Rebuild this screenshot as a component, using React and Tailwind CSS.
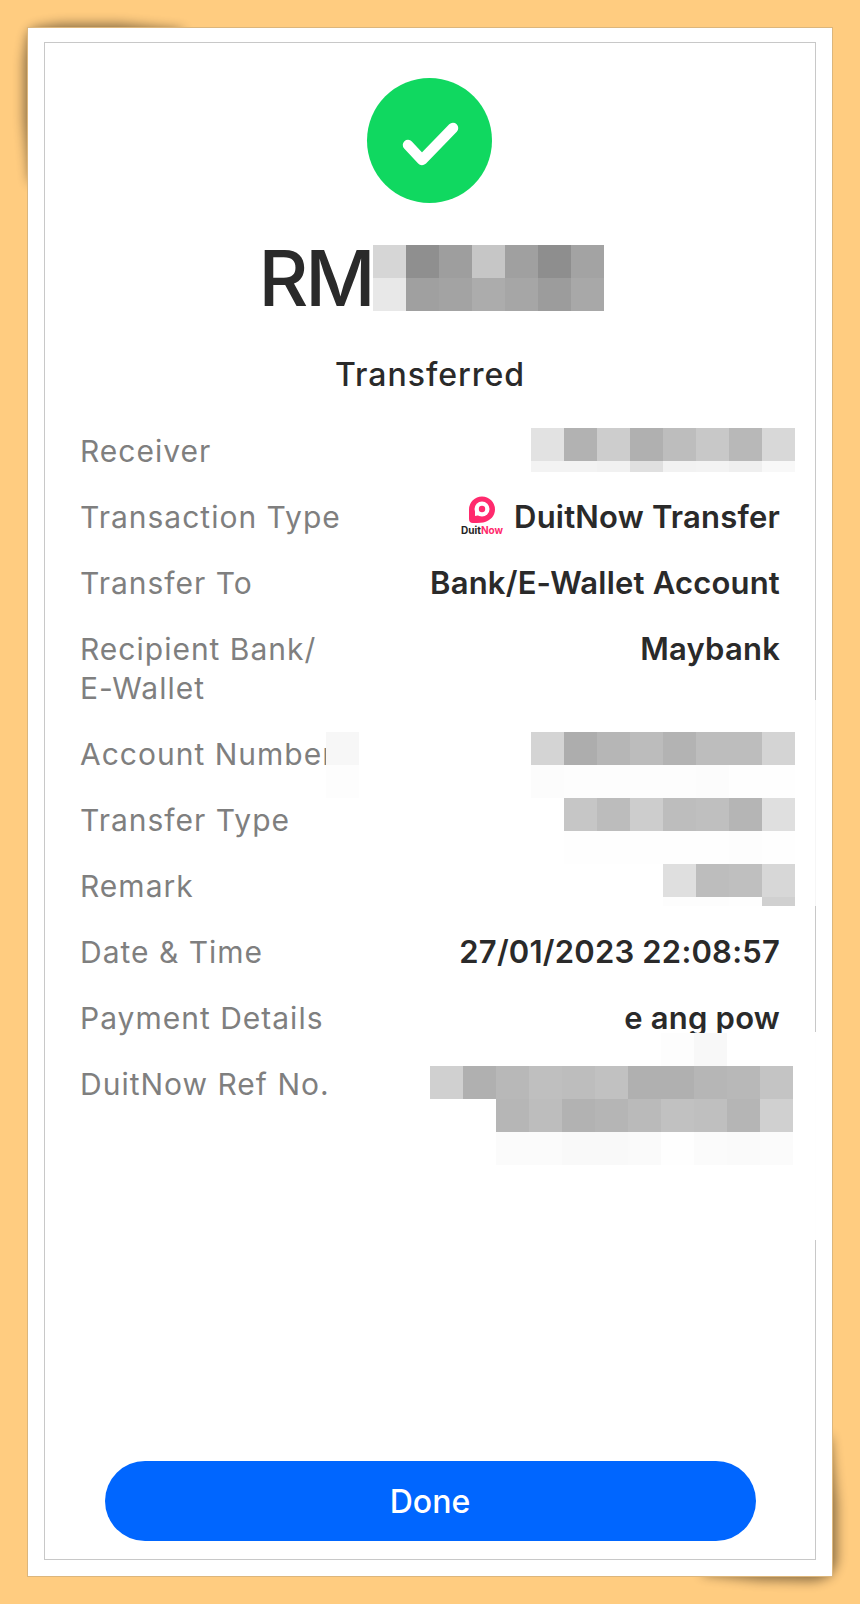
const mosaics = {
  amount: [
    { h: 'h-[33px]', cells: ['bg-[#d6d6d6]', 'bg-[#8f8f8f]', 'bg-[#9e9e9e]', 'bg-[#c6c6c6]', 'bg-[#a0a0a0]', 'bg-[#8e8e8e]', 'bg-[#a3a3a3]'] },
    { h: 'h-[33px]', cells: ['bg-[#e8e8e8]', 'bg-[#a0a0a0]', 'bg-[#a3a3a3]', 'bg-[#acacac]', 'bg-[#a6a6a6]', 'bg-[#9c9c9c]', 'bg-[#a8a8a8]'] },
  ],
  receiver: [
    { h: 'h-[33px]', cells: ['bg-[#e2e2e2]', 'bg-[#b2b2b2]', 'bg-[#cdcdcd]', 'bg-[#b0b0b0]', 'bg-[#bdbdbd]', 'bg-[#c8c8c8]', 'bg-[#b8b8b8]', 'bg-[#d8d8d8]'] },
    { h: 'h-[11px]', cells: ['bg-[#f3f3f3]', 'bg-[#f3f3f3]', 'bg-[#f1f1f1]', 'bg-[#e0e0e0]', 'bg-[#f2f2f2]', 'bg-[#f3f3f3]', 'bg-[#efefef]', 'bg-[#f8f8f8]'] },
  ],
  account: [
    { h: 'h-[33px]', cells: ['bg-[#d4d4d4]', 'bg-[#adadad]', 'bg-[#b6b6b6]', 'bg-[#bcbcbc]', 'bg-[#b3b3b3]', 'bg-[#bdbdbd]', 'bg-[#bdbdbd]', 'bg-[#d4d4d4]'] },
    { h: 'h-[33px]', cells: ['bg-[#fcfcfc]', 'bg-[#fdfdfd]', 'bg-[#fdfdfd]', 'bg-[#fdfdfd]', 'bg-[#fdfdfd]', 'bg-[#fcfcfc]', 'bg-[#fefefe]', 'bg-[#fefefe]'] },
  ],
  accountLabel: [
    { h: 'h-[33px]', cells: ['bg-[#f7f7f7]'] },
    { h: 'h-[33px]', cells: ['bg-[#fdfdfd]'] },
  ],
  transferType: [
    { h: 'h-[33px]', cells: ['bg-[#c6c6c6]', 'bg-[#bcbcbc]', 'bg-[#cdcdcd]', 'bg-[#bdbdbd]', 'bg-[#bfbfbf]', 'bg-[#b5b5b5]', 'bg-[#dfdfdf]'] },
    { h: 'h-[33px]', cells: ['bg-[#fefefe]', 'bg-[#fefefe]', 'bg-[#fefefe]', 'bg-[#fefefe]', 'bg-[#fefefe]', 'bg-[#fdfdfd]', 'bg-[#fefefe]'] },
  ],
  remark: [
    { h: 'h-[33px]', cells: ['bg-[#dfdfdf]', 'bg-[#bdbdbd]', 'bg-[#bfbfbf]', 'bg-[#d7d7d7]'] },
    { h: 'h-[9px]', cells: ['bg-[#fdfdfd]', 'bg-[#fdfdfd]', 'bg-[#fefefe]', 'bg-[#d0d0d0]'] },
  ],
  ref: [
    { h: 'h-[33px]', cells: [null, null, null, null, null, 'bg-white', 'bg-white', 'bg-[#fdfdfd]', 'bg-[#f8f8f8]', 'bg-white', 'bg-white'] },
    { h: 'h-[33px]', cells: ['bg-[#d0d0d0]', 'bg-[#b0b0b0]', 'bg-[#b8b8b8]', 'bg-[#bfbfbf]', 'bg-[#bdbdbd]', 'bg-[#c1c1c1]', 'bg-[#b0b0b0]', 'bg-[#b0b0b0]', 'bg-[#b6b6b6]', 'bg-[#b8b8b8]', 'bg-[#c4c4c4]'] },
    { h: 'h-[33px]', cells: [null, null, 'bg-[#b6b6b6]', 'bg-[#bdbdbd]', 'bg-[#b2b2b2]', 'bg-[#b5b5b5]', 'bg-[#bababa]', 'bg-[#c1c1c1]', 'bg-[#bfbfbf]', 'bg-[#b5b5b5]', 'bg-[#d0d0d0]'] },
    { h: 'h-[33px]', cells: [null, null, 'bg-[#fbfbfb]', 'bg-[#fbfbfb]', 'bg-[#f9f9f9]', 'bg-[#f9f9f9]', 'bg-[#fafafa]', 'bg-[#fefefe]', 'bg-[#fbfbfb]', 'bg-[#fafafa]', 'bg-[#fbfbfb]'] },
  ],
}

function Mosaic({ rows, className = '' }) {
  return (
    <div className={`flex flex-col ${className}`}>
      {rows.map((row, i) => (
        <div key={i} className={`flex ${row.h}`}>
          {row.cells.map((cell, j) => (
            <div key={j} className={`w-[33px] h-full ${cell || ''}`} />
          ))}
        </div>
      ))}
    </div>
  )
}

function DuitNowLogo() {
  return (
    <div className="flex flex-col items-center w-[44px] mr-[10px] mt-[-4px]">
      <svg width="28" height="27" viewBox="0 0 28 27">
        <path d="M1 13.5a13 13 0 1 1 26 0c0 6.5-5 11-10 12.5-2 .6-6 .9-12 1a4 4 0 0 1-4-4z" fill="#ff2a6d" />
        <circle cx="14" cy="13" r="7.5" fill="#fff" />
        <path d="M7 13v7l5-1z" fill="#fff" />
        <circle cx="14" cy="13" r="3.2" fill="#ff2a6d" />
      </svg>
      <div className="text-[10px] leading-[10px] font-bold tracking-normal mt-[2px]">
        <span className="text-[#222222]">Duit</span>
        <span className="text-[#ff2a6d]">Now</span>
      </div>
    </div>
  )
}

function Row({ label, children }) {
  return (
    <div className="relative flex justify-between items-start leading-[38px] mb-[28px]">
      <div className="w-[280px] text-[30px] text-[#7f7f7f] tracking-[1px]">{label}</div>
      <div className="flex items-center text-[31px] font-semibold text-[#2a2a2a] tracking-[0.2px] whitespace-nowrap">{children}</div>
    </div>
  )
}

export default function App() {
  return (
    <div className="relative h-[1604px] w-[860px] overflow-hidden bg-[#ffcc80] px-[27px] pt-[27px] pb-[27px] font-['Inter',sans-serif]">
      {/* curled corner shadows */}
      <div className="absolute left-0 top-0 blur-[6px] opacity-45">
        <div className="w-[220px] h-[220px] bg-black [clip-path:polygon(34px_28px,60px_24px,120px_24px,185px_30px,30px_185px,24px_120px,24px_60px,28px_34px)]" />
      </div>
      <div className="absolute right-0 bottom-0 blur-[6px] opacity-45">
        <div className="w-[220px] h-[220px] bg-black [clip-path:polygon(60px_190px,120px_196px,175px_197px,190px_192px,197px_178px,197px_120px,190px_50px)]" />
      </div>

      <div className="relative h-full bg-white border border-[#dcb67c] px-[16px] pt-[14px] pb-[16px]">
        <div className="relative flex flex-col h-full border border-[#c8c8c8] pl-[35px] pr-[35px]">
          {/* broken right edge of the frame */}
          <div className="absolute right-[-1px] top-[657px] w-px h-[206px] bg-[#f6f6f6]" />
          <div className="absolute right-[-1px] top-[989px] w-px h-[208px] bg-[#fefefe]" />

          <div className="self-center mt-[35px] mr-[2px] w-[125px] h-[125px] rounded-full bg-[#10d860] flex items-center justify-center">
            <svg width="125" height="125" viewBox="0 0 125 125" fill="none">
              <path d="M41 67 L55 82 L86 50" stroke="#fff" strokeWidth="10.5" strokeLinecap="round" strokeLinejoin="round" />
            </svg>
          </div>

          <div className="flex justify-center items-center pl-[2px] mt-[42px] h-[66px]">
            <span className="text-[77px] leading-[66px] font-medium text-[#2a2a2a] tracking-[-3px]">RM</span>
            <Mosaic rows={mosaics.amount} />
          </div>

          <div className="text-center text-[32px] leading-[40px] font-medium text-[#2a2a2a] tracking-[1px] mt-[44px] mb-[37px]">Transferred</div>

          <Row label="Receiver">
            <Mosaic rows={mosaics.receiver} className="absolute right-[-15px] top-[-4px]" />
          </Row>
          <Row label="Transaction Type">
            <DuitNowLogo />
            DuitNow Transfer
          </Row>
          <Row label="Transfer To">Bank/E-Wallet Account</Row>
          <Row label={<>Recipient Bank/<span className="block mt-px">E-Wallet</span></>}>Maybank</Row>
          <Row label="Account Number">
            <Mosaic rows={mosaics.accountLabel} className="absolute left-[246px] top-[-3px]" />
            <Mosaic rows={mosaics.account} className="absolute right-[-15px] top-[-3px]" />
          </Row>
          <Row label="Transfer Type">
            <Mosaic rows={mosaics.transferType} className="absolute right-[-15px] top-[-3px]" />
          </Row>
          <Row label="Remark">
            <Mosaic rows={mosaics.remark} className="absolute right-[-15px] top-[-3px]" />
          </Row>
          <Row label="Date & Time">27/01/2023 22:08:57</Row>
          <Row label="Payment Details">e ang pow</Row>
          <Row label="DuitNow Ref No.">
            <Mosaic rows={mosaics.ref} className="absolute right-[-13px] top-[-32px]" />
          </Row>

          <button className="self-center mt-auto mb-[18px] w-[651px] h-[80px] pt-[2px] rounded-full bg-[#0066ff] text-white text-[32px] font-medium">
            Done
          </button>
        </div>
      </div>
    </div>
  )
}
